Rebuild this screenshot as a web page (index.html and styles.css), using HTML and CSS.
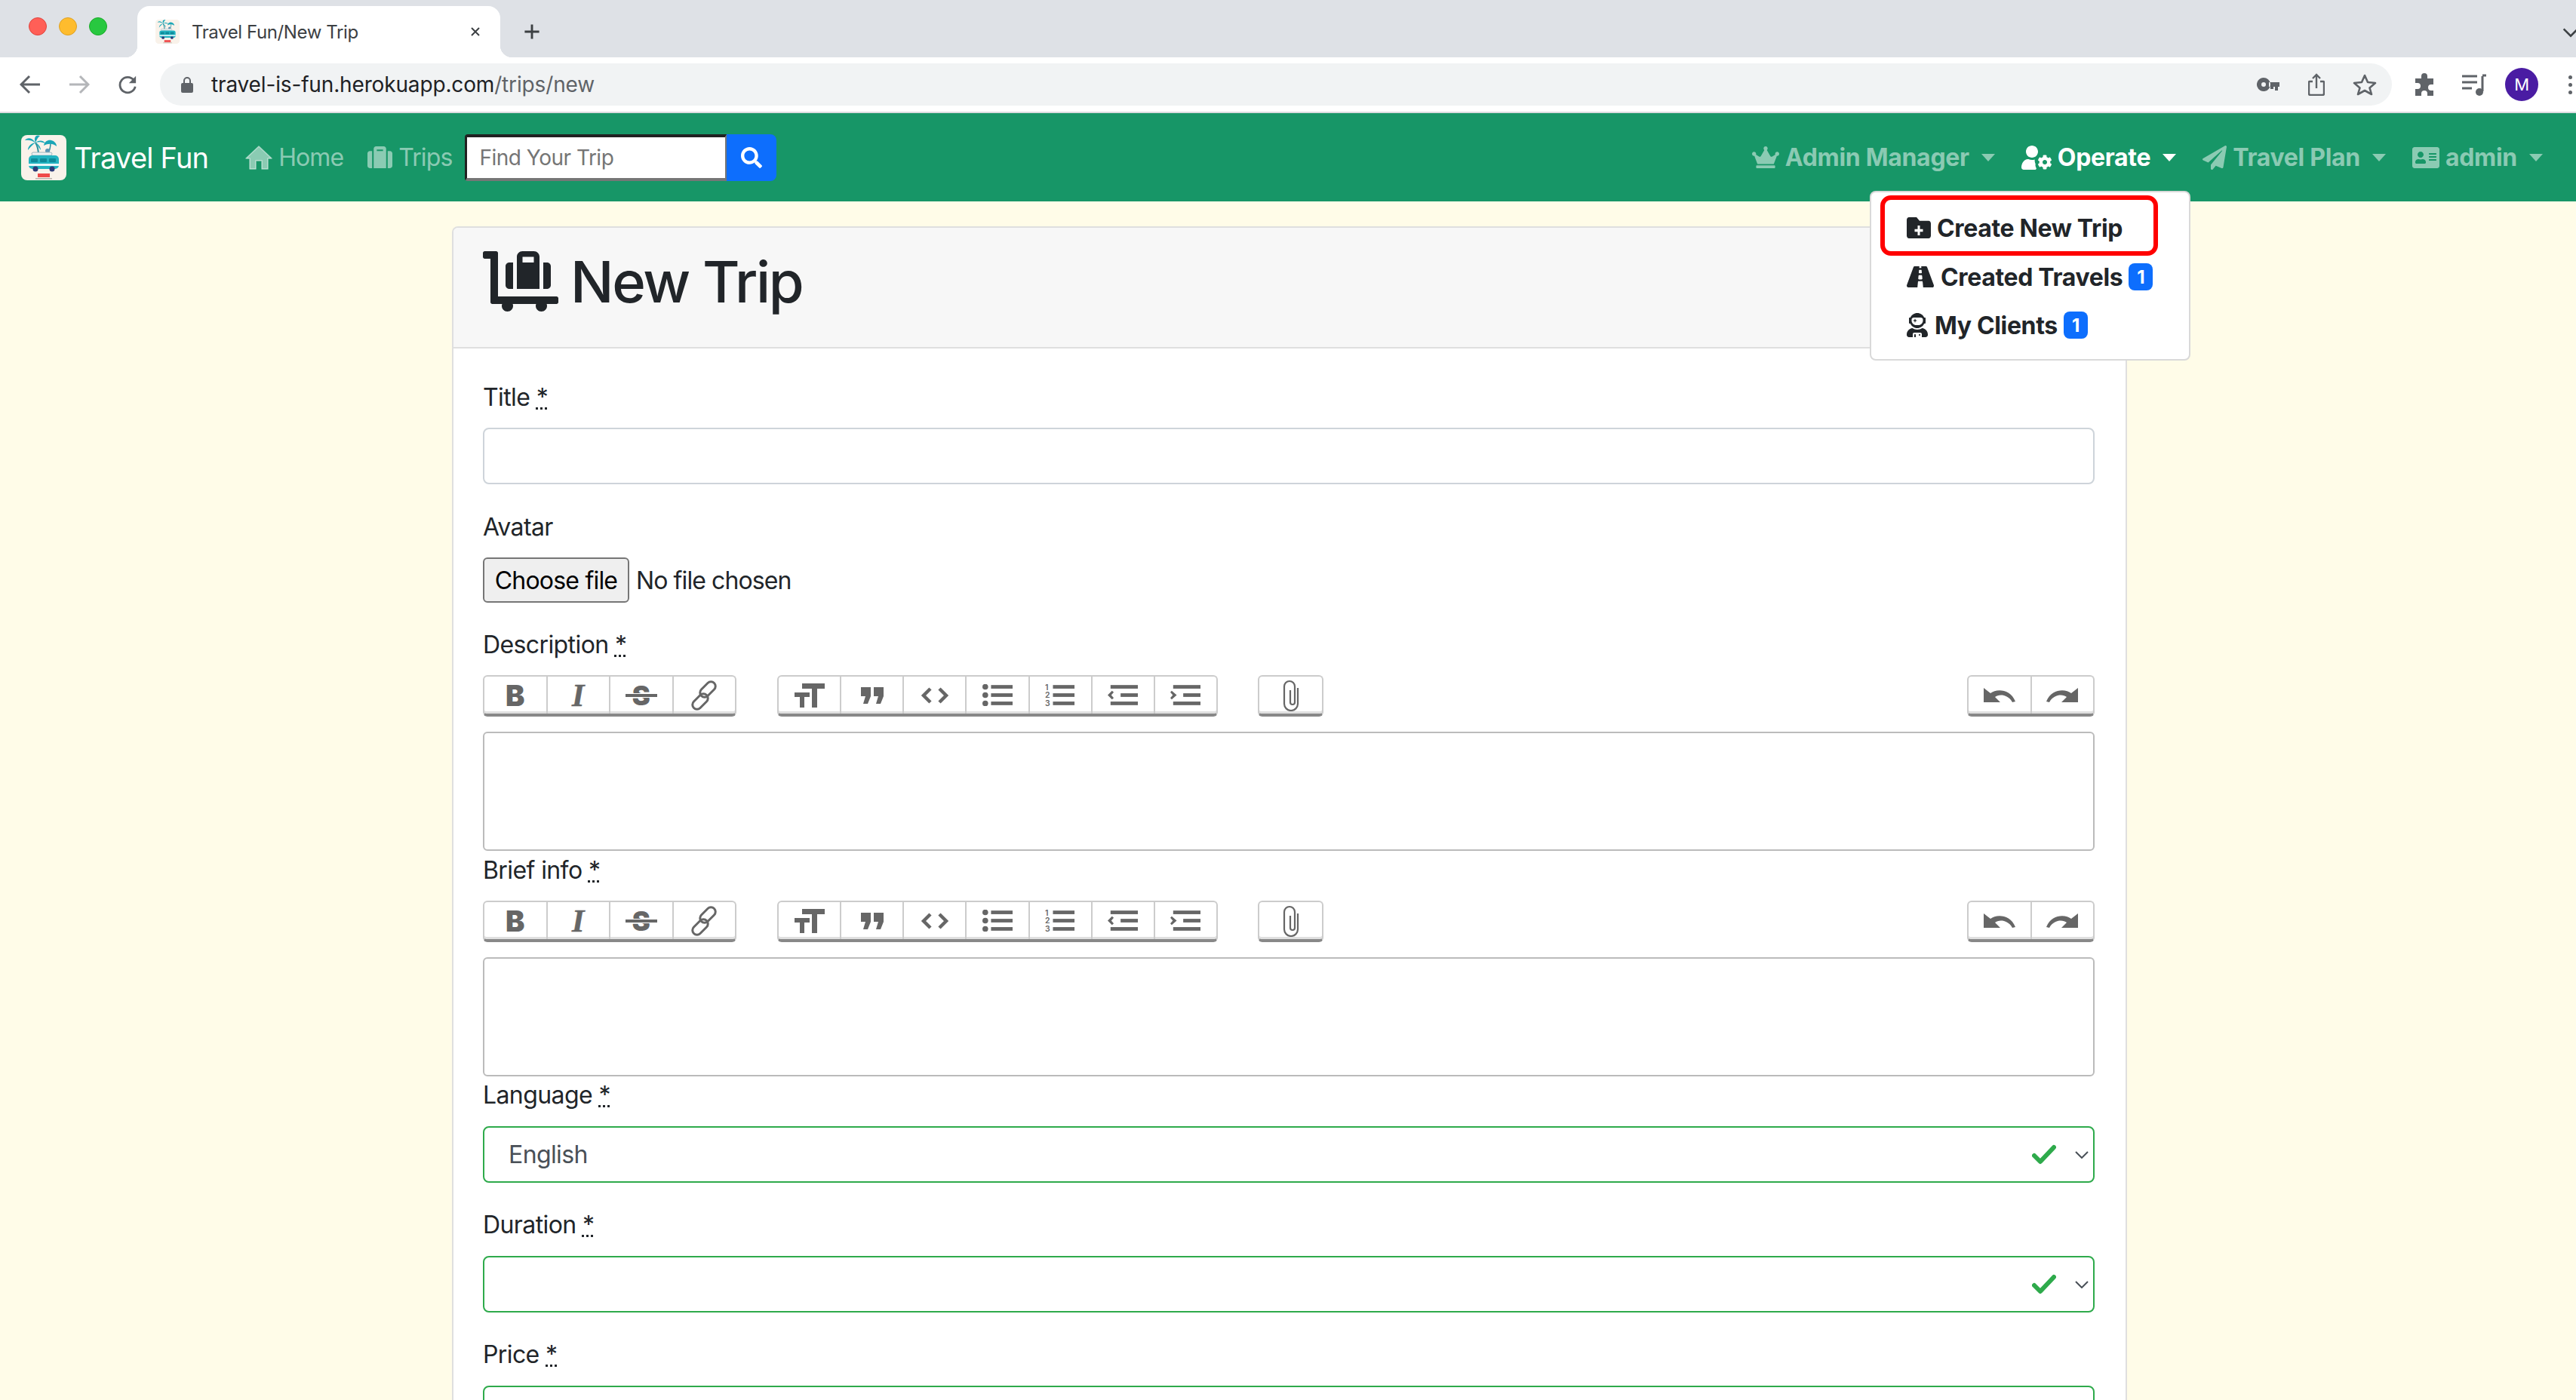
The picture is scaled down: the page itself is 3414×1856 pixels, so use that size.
FILE: index.html
```html
<!DOCTYPE html>
<html lang="en">
<head>
<meta charset="utf-8">
<title>Travel Fun/New Trip</title>
<link rel="stylesheet" href="styles.css">
</head>
<body>
<svg class="defs" width="0" height="0" aria-hidden="true">
  <symbol id="logo" viewBox="0 0 60 60">
    <rect width="60" height="60" rx="8" fill="#f9f2ea"/>
    <path d="M19 10c3 5 4 11 4 17" stroke="#2b8f9c" stroke-width="2" fill="none"/>
    <path d="M19 10C14 3 8 3 5 7c5-1 9 0 14 3zm0 0C16 3 20-1 25 1c-3 2-4 5-6 9zm0 0c5-4 11-3 13 1-5-2-9-2-13-1zm0 0c-6 1-10 5-10 10 3-4 6-7 10-10zm0 0c4 2 7 6 7 10-3-4-4-7-7-10z" fill="#1aa6b7"/>
    <path d="M39 10c0 5-1 10-3 14" stroke="#2b8f9c" stroke-width="1.500" fill="none"/>
    <path d="M30 14c1-6 6-8 10-7 4 1 7 4 7 8-5-4-11-4-17-1z" fill="#1aa6b7"/>
    <circle cx="35" cy="21" r="3" fill="#5b95b5"/>
    <rect x="14" y="23" width="27" height="4" rx="2" fill="#eef2f3" stroke="#9fb5bd"/>
    <rect x="10" y="27" width="40" height="18" rx="5" fill="#23b3c1"/>
    <rect x="13" y="31" width="9" height="5" rx="1" fill="#0f8a99"/><rect x="25" y="31" width="9" height="5" rx="1" fill="#0f8a99"/><rect x="37" y="31" width="9" height="5" rx="1" fill="#0f8a99"/>
    <rect x="10" y="38" width="40" height="3" fill="#e8f7f9"/>
    <circle cx="19" cy="45" r="3.500" fill="#2b3a78"/><circle cx="41" cy="45" r="3.500" fill="#2b3a78"/>
    <rect x="22" y="51" width="16" height="5" fill="#ef4a4a"/>
    <rect x="19" y="57" width="22" height="1.500" fill="#b9b3ad"/>
  </symbol>
</svg>

<div class="tabstrip">
  <div class="lights"><span class="light red"></span><span class="light yellow"></span><span class="light green"></span></div>
  <div class="tab">
    <svg class="favicon"><use href="#logo"/></svg>
    <span class="tab-title">Travel Fun/New Trip</span>
    <svg class="tab-close" viewBox="0 0 14 14"><path d="M2 2l10 10M12 2L2 12" stroke="#3c4043" stroke-width="2" fill="none"/></svg>
  </div>
  <svg class="new-tab" viewBox="0 0 20 20"><path d="M10 2v16M2 10h16" stroke="#3c4043" stroke-width="2.400" fill="none"/></svg>
  <svg class="tab-more" viewBox="0 0 18 12"><path d="M1 2l8 8 8-8" stroke="#3c4043" stroke-width="2.200" fill="none"/></svg>
</div>

<div class="toolbar">
  <svg class="tb-nav" viewBox="0 0 28 26"><path d="M27 13H3M13 2L2 13l11 11" stroke="#5f6368" stroke-width="3" fill="none"/></svg>
  <svg class="tb-nav dim" viewBox="0 0 28 26"><path d="M1 13h24M15 2l11 11-11 11" stroke="#b4b6b9" stroke-width="3" fill="none"/></svg>
  <svg class="tb-nav reload" viewBox="0 0 28 28"><path d="M23 8a11 11 0 1 0 2 9" stroke="#5f6368" stroke-width="3" fill="none"/><path d="M26 2v10H16z" fill="#5f6368"/></svg>
  <div class="omnibox">
    <svg class="lock" viewBox="0 0 16 22"><path d="M3 9V6a5 5 0 0 1 10 0v3h1a2 2 0 0 1 2 2v9a2 2 0 0 1-2 2H2a2 2 0 0 1-2-2v-9a2 2 0 0 1 2-2zm2 0h6V6a3 3 0 0 0-6 0z" fill="#5f6368"/></svg>
    <span class="url"><span class="url-host">travel-is-fun.herokuapp.com</span>/trips/new</span>
    <svg class="omni-key" viewBox="0 0 30 20"><path d="M9 1a9 9 0 1 1-8.500 12A9 9 0 0 1 9 1zm0 6a3 3 0 1 0 0 6 3 3 0 0 0 0-6zm7 0h14v6h-2v5h-4v-5h-2v3h-4v-3h-2z" fill="#5f6368" fill-rule="evenodd"/></svg>
    <svg class="omni-share" viewBox="0 0 22 30"><path d="M6 11H2a1 1 0 0 0-1 1v15a2 2 0 0 0 2 2h16a2 2 0 0 0 2-2V12a1 1 0 0 0-1-1h-4M11 20V2M6 7l5-5 5 5" stroke="#5f6368" stroke-width="2.400" fill="none"/></svg>
    <svg class="omni-star" viewBox="0 0 32 30"><path d="M16 3l4 9 10 1-7.500 6.500L25 28l-9-5-9 5 2.500-8.500L2 13l10-1z" stroke="#5f6368" stroke-width="2.600" fill="none" stroke-linejoin="round"/></svg>
  </div>
  <svg class="ext-puzzle" viewBox="0 0 30 30"><path d="M11 4a4 4 0 0 1 8 0v3h8v8h-3a4 4 0 0 0 0 8h3v7h-8v-3a4 4 0 0 0-8 0v3H3v-9h3a4 4 0 0 0 0-8H3V7h8z" fill="#5f6368"/></svg>
  <svg class="ext-music" viewBox="0 0 32 30"><path d="M0 4h20M0 12h20M0 20h13" stroke="#5f6368" stroke-width="3" fill="none"/><path d="M27 4v20" stroke="#5f6368" stroke-width="3"/><path d="M27 3h5" stroke="#5f6368" stroke-width="3"/><circle cx="23" cy="25" r="5" fill="#5f6368"/></svg>
  <span class="avatar">M</span>
  <span class="kebab"><i></i><i></i><i></i></span>
</div>

<nav class="navbar">
  <a class="brand"><svg class="brand-logo"><use href="#logo"/></svg><span>Travel Fun</span></a>
  <a class="nav-link home"><svg class="ic-home" viewBox="0 0 36 32"><path d="M18 1L35 17h-5v14h-8V20h-8v11H6V17H1z" fill="currentColor" stroke="currentColor" stroke-width="1.500" stroke-linejoin="round"/></svg>Home</a>
  <a class="nav-link trips"><svg class="ic-trips" viewBox="0 0 512 512"><path fill="currentColor" d="M128 480h256V80c0-26.500-21.500-48-48-48H176c-26.500 0-48 21.500-48 48v400zm64-384h128v32H192V96zm320 80v256c0 26.500-21.500 48-48 48h-48V128h48c26.500 0 48 21.500 48 48zM96 480H48c-26.500 0-48-21.500-48-48V176c0-26.500 21.500-48 48-48h48v352z"/></svg>Trips</a>
  <form class="search">
    <input class="search-input" type="text" placeholder="Find Your Trip">
    <button class="search-btn" type="button"><svg viewBox="0 0 512 512"><path fill="#fff" d="M505 442.700L405.300 343c-4.500-4.500-10.600-7-17-7H372c27.600-35.300 44-79.700 44-128C416 93.100 322.900 0 208 0S0 93.100 0 208s93.100 208 208 208c48.300 0 92.700-16.400 128-44v16.300c0 6.400 2.500 12.500 7 17l99.700 99.700c9.400 9.400 24.600 9.400 33.900 0l28.300-28.300c9.400-9.400 9.400-24.600.100-34zM208 336c-70.700 0-128-57.200-128-128 0-70.700 57.200-128 128-128 70.700 0 128 57.200 128 128 0 70.700-57.200 128-128 128z"/></svg></button>
  </form>
  <div class="nav-right">
    <a class="nav-menu admin-mgr"><svg class="ic-crown" viewBox="0 0 640 512"><path fill="currentColor" d="M528 448H112c-8.800 0-16 7.200-16 16v32c0 8.800 7.200 16 16 16h416c8.800 0 16-7.200 16-16v-32c0-8.800-7.200-16-16-16zm64-320c-26.500 0-48 21.500-48 48 0 7.100 1.600 13.700 4.400 19.800L476 239.200c-15.400 9.200-35.300 4-44.200-11.600L350.300 85C361 76.200 368 63 368 48c0-26.500-21.500-48-48-48s-48 21.500-48 48c0 15 7 28.200 17.600 37l-81.500 142.600c-8.900 15.600-28.900 20.800-44.200 11.600l-72.300-43.400c2.700-6 4.400-12.700 4.400-19.800 0-26.500-21.500-48-48-48S0 149.500 0 176s21.500 48 48 48c2.600 0 5.200-.4 7.700-.8L128 416h384l72.300-192.800c2.500.4 5.100.8 7.700.8 26.500 0 48-21.500 48-48s-21.500-48-48-48z"/></svg>Admin Manager<i class="caret"></i></a>
    <a class="nav-menu active"><svg class="ic-usercog" viewBox="0 0 640 512"><path fill="currentColor" d="M610.500 373.300c2.600-14.100 2.600-28.500 0-42.600l25.800-14.900c3-1.700 4.300-5.200 3.300-8.500-6.700-21.600-18.200-41.200-33.200-57.400-2.300-2.500-6-3.100-9-1.400l-25.800 14.900c-10.900-9.300-23.400-16.500-36.900-21.300v-29.800c0-3.400-2.400-6.400-5.700-7.100-22.300-5-45-4.800-66.200 0-3.300.7-5.700 3.700-5.700 7.100v29.800c-13.500 4.800-26 12-36.900 21.300l-25.800-14.900c-2.900-1.700-6.700-1.100-9 1.400-15 16.200-26.500 35.800-33.200 57.400-1 3.300.4 6.800 3.300 8.500l25.800 14.900c-2.600 14.100-2.600 28.500 0 42.600l-25.800 14.900c-3 1.700-4.300 5.200-3.300 8.500 6.700 21.600 18.200 41.100 33.200 57.400 2.300 2.500 6 3.100 9 1.400l25.800-14.900c10.900 9.300 23.400 16.500 36.900 21.300v29.800c0 3.400 2.400 6.400 5.700 7.100 22.300 5 45 4.800 66.200 0 3.300-.7 5.700-3.700 5.700-7.100v-29.800c13.500-4.800 26-12 36.900-21.300l25.800 14.900c2.900 1.700 6.700 1.100 9-1.400 15-16.200 26.500-35.800 33.200-57.400 1-3.300-.4-6.800-3.300-8.500l-25.800-14.900zM496 400.500c-26.800 0-48.500-21.800-48.500-48.500s21.800-48.500 48.500-48.500 48.500 21.800 48.500 48.500-21.700 48.500-48.500 48.500zM224 256c70.700 0 128-57.300 128-128S294.700 0 224 0 96 57.300 96 128s57.300 128 128 128zM0 464c0-90 60-176 134-176h17c22 10 47 16 73 16 20 0 40-4 58-10-2 40 4 70 18 96-10 30 0 60 16 90 4 8-4 32-20 32H48c-26 0-48-22-48-48z"/></svg>Operate<i class="caret"></i></a>
    <a class="nav-menu travel-plan"><svg class="ic-plane" viewBox="0 0 512 512"><path fill="currentColor" d="M476 3.200L12.500 270.600c-18.100 10.400-15.800 35.600 2.200 43.200L121 358.400l287.300-253.200c5.500-4.900 13.300 2.600 8.600 8.300L176 407v80.500c0 23.600 28.500 32.900 42.500 15.800L282 426l124.600 52.200c14.200 6 30.400-2.900 33-18.200l72-432C515 7.800 493.300-6.800 476 3.200z"/></svg>Travel Plan<i class="caret"></i></a>
    <a class="nav-menu"><svg class="ic-idcard" viewBox="0 32 576 448"><path fill="currentColor" d="M528 32H48C21.500 32 0 53.500 0 80v352c0 26.500 21.500 48 48 48h480c26.500 0 48-21.500 48-48V80c0-26.500-21.500-48-48-48zm-352 96c35.300 0 64 28.700 64 64s-28.700 64-64 64-64-28.700-64-64 28.700-64 64-64zm112 236.800c0 10.600-10 19.200-22.400 19.200H86.400C74 384 64 375.400 64 364.800v-19.200c0-31.800 30.100-57.600 67.200-57.600h5c12.300 5.100 25.700 8 39.800 8s27.600-2.900 39.800-8h5c37.100 0 67.200 25.800 67.200 57.600v19.200zM512 312c0 4.400-3.600 8-8 8H360c-4.400 0-8-3.600-8-8v-16c0-4.400 3.600-8 8-8h144c4.400 0 8 3.600 8 8v16zm0-64c0 4.400-3.600 8-8 8H360c-4.400 0-8-3.600-8-8v-16c0-4.400 3.600-8 8-8h144c4.400 0 8 3.600 8 8v16zm0-64c0 4.400-3.600 8-8 8H360c-4.400 0-8-3.600-8-8v-16c0-4.400 3.600-8 8-8h144c4.400 0 8 3.600 8 8v16z"/></svg>admin<i class="caret"></i></a>
  </div>
</nav>

<div class="dropdown">
  <a class="dd-item highlighted"><svg class="ic-folder" viewBox="0 64 512 384" preserveAspectRatio="none"><path fill="#212529" fill-rule="evenodd" d="M464 128H272l-64-64H48C21.490 64 0 85.490 0 112v288c0 26.510 21.490 48 48 48h416c26.510 0 48-21.490 48-48V176c0-26.510-21.490-48-48-48zM232 216h48v64h64v48h-64v64h-48v-64h-64v-48h64z"/></svg>Create New Trip</a>
  <a class="dd-item second"><svg class="ic-road" viewBox="0 64 576 384" preserveAspectRatio="none"><path fill="#212529" d="M573.190 402.670l-139.790-320C428.430 71.290 417.600 64 405.680 64h-97.590l2.450 23.160c.5 4.720-3.210 8.840-7.960 8.840h-29.160c-4.750 0-8.460-4.120-7.960-8.840L267.910 64h-97.590c-11.930 0-22.760 7.290-27.730 18.670L2.800 402.670C-6.450 423.860 8.310 448 30.540 448h196.840l10.310-97.680c.86-8.140 7.720-14.320 15.910-14.320h68.800c8.190 0 15.050 6.180 15.910 14.320L348.620 448h196.840c22.230 0 36.990-24.140 27.730-45.330zM260.400 135.160a8 8 0 0 1 7.960-7.160h39.290c4.090 0 7.530 3.090 7.960 7.160l4.600 43.580c.75 7.090-4.810 13.260-11.930 13.260h-40.540c-7.130 0-12.680-6.170-11.930-13.260l4.600-43.580zM315.640 304h-55.290c-9.500 0-16.910-8.230-15.910-17.680l5.070-48c.86-8.140 7.720-14.320 15.910-14.320h45.150c8.190 0 15.050 6.180 15.910 14.320l5.070 48c1 9.450-6.410 17.680-15.910 17.680z"/></svg>Created Travels<span class="badge">1</span></a>
  <a class="dd-item"><svg class="ic-astro" viewBox="0 0 448 512"><path fill="#212529" d="M64 224h13.500c24.700 56.500 80.900 96 146.500 96s121.800-39.500 146.500-96H384c8.800 0 16-7.200 16-16v-96c0-8.800-7.200-16-16-16h-13.500C345.800 39.500 289.600 0 224 0S102.200 39.500 77.500 96H64c-8.800 0-16 7.200-16 16v96c0 8.800 7.200 16 16 16zm40-88c0-22 21.500-40 48-40h144c26.500 0 48 18 48 40v24c0 53-43 96-96 96h-48c-53 0-96-43-96-96v-24zm72 72l12-36 36-12-36-12-12-36-12 36-36 12 36 12 12 36zm151.600 113.400C297.700 340.700 262.200 352 224 352s-73.700-11.300-103.600-30.600C52.900 328.500 0 385 0 454.400v9.600c0 26.500 21.500 48 48 48h80v-64c0-17.700 14.300-32 32-32h128c17.700 0 32 14.300 32 32v64h80c26.500 0 48-21.500 48-48v-9.600c0-69.400-52.900-125.900-120.400-133zM272 448c-8.800 0-16 7.200-16 16s7.200 16 16 16 16-7.200 16-16-7.200-16-16-16zm-96 0c-8.800 0-16 7.200-16 16v48h32v-48c0-8.800-7.200-16-16-16z"/></svg>My Clients<span class="badge">1</span></a>
</div>

<main class="page">
  <section class="card">
    <header class="card-header">
      <svg class="ic-cart" viewBox="0 0 640 512"><path fill="#212529" d="M224 320h32V96h-32c-17.670 0-32 14.330-32 32v160c0 17.670 14.330 32 32 32zm352-32V128c0-17.670-14.330-32-32-32h-32v224h32c17.670 0 32-14.330 32-32zm48 96H128V16c0-8.840-7.160-16-16-16H16C7.160 0 0 7.160 0 16v32c0 8.840 7.160 16 16 16h48v368c0 8.840 7.160 16 16 16h82.940c-1.790 5.030-2.940 10.360-2.940 16 0 26.510 21.490 48 48 48s48-21.490 48-48c0-5.640-1.150-10.970-2.940-16h197.880c-1.790 5.030-2.940 10.360-2.940 16 0 26.510 21.490 48 48 48s48-21.490 48-48c0-5.640-1.150-10.970-2.940-16H624c8.840 0 16-7.160 16-16v-32c0-8.840-7.160-16-16-16zM480 96V48c0-26.510-21.490-48-48-48h-96c-26.510 0-48 21.490-48 48v272h192V96zm-48 0h-96V48h96v48z"/></svg>
      <h1>New Trip</h1>
    </header>
    <form class="card-body">
      <div class="field title-field">
        <label>Title <abbr title="required">*</abbr></label>
        <input class="control" type="text">
      </div>
      <div class="field">
        <label>Avatar</label>
        <div class="file-row"><button class="file-btn" type="button">Choose file</button><span class="file-name">No file chosen</span></div>
      </div>

      <div class="rich">
        <label>Description <abbr title="required">*</abbr></label>
        <div class="trix-toolbar">
          <div class="btn-group g-text">
            <button type="button" class="tbtn w86"><b class="g-b">B</b></button>
            <button type="button" class="tbtn"><i class="g-i">I</i></button>
            <button type="button" class="tbtn"><span class="g-s">S</span></button>
            <button type="button" class="tbtn"><svg class="ti sq" viewBox="0 0 40 40"><g fill="none" stroke="#666" stroke-width="3"><rect x="19" y="0" width="12" height="24" rx="6" transform="rotate(45 25 12)"/><rect x="9" y="16" width="12" height="24" rx="6" transform="rotate(45 15 28)"/></g></svg></button>
          </div>
          <div class="btn-group g-block">
            <button type="button" class="tbtn"><svg class="ti sq" viewBox="0 0 40 40"><path fill="#666" d="M10 4h30v7H30v25h-7V11H10zM0 16h20v6h-7v14H7V22H0z"/></svg></button>
            <button type="button" class="tbtn"><svg class="ti sq" viewBox="0 0 40 40"><path fill="#666" d="M5 9h13v12l-4 10H8l3-10H5zM22 9h13v12l-4 10h-6l3-10h-6z"/></svg></button>
            <button type="button" class="tbtn"><svg class="ti sq" viewBox="0 0 40 40"><path fill="none" stroke="#666" stroke-width="4.500" d="M14 11l-9 9 9 9M26 11l9 9-9 9"/></svg></button>
            <button type="button" class="tbtn"><svg class="ti" viewBox="0 0 42 30"><g fill="#666"><circle cx="4" cy="3.500" r="4"/><circle cx="4" cy="15" r="4"/><circle cx="4" cy="26.500" r="4"/><rect x="12" y="1" width="30" height="5"/><rect x="12" y="12.500" width="30" height="5"/><rect x="12" y="24" width="30" height="5"/></g></svg></button>
            <button type="button" class="tbtn"><svg class="ti ti-num" viewBox="0 -4 42 38"><g fill="#666"><text x="0" y="8" class="num">1</text><text x="0" y="19" class="num">2</text><text x="0" y="30" class="num">3</text><rect x="11" y="1" width="30" height="5"/><rect x="11" y="12.500" width="30" height="5"/><rect x="11" y="24" width="30" height="5"/></g></svg></button>
            <button type="button" class="tbtn"><svg class="ti" viewBox="0 0 42 30"><g fill="#666"><rect x="4" y="1" width="38" height="5"/><rect x="18" y="12.500" width="24" height="5"/><rect x="4" y="24" width="38" height="5"/><path d="M6 9l2.500 2L5 15l3.500 4L6 21l-6-6z"/></g></svg></button>
            <button type="button" class="tbtn"><svg class="ti" viewBox="0 0 42 30"><g fill="#666"><rect x="4" y="1" width="38" height="5"/><rect x="18" y="12.500" width="24" height="5"/><rect x="4" y="24" width="38" height="5"/><path d="M2 9l7 6-7 6-2-2 3.500-4L0 11z"/></g></svg></button>
          </div>
          <div class="btn-group g-file">
            <button type="button" class="tbtn wide"><svg class="ti tall" viewBox="0 0 22 42"><path fill="none" stroke="#666" stroke-width="2.200" d="M20 11v21a9 9 0 0 1-18 0V9a7 7 0 0 1 14 0v21a3 3 0 0 1-6 0V14"/></svg></button>
          </div>
          <div class="btn-group g-hist">
            <button type="button" class="tbtn half"><svg class="ti" viewBox="0 0 42 20"><path fill="#666" d="M0 0l9 7c8-6 26-6 33 11l-4 1C32 8 20 8 15 12l7 7H0z"/></svg></button>
            <button type="button" class="tbtn half"><svg class="ti" viewBox="0 0 42 20"><path fill="#666" d="M42 0l-9 7C25 1 7 1 0 18l4 1C10 8 22 8 27 12l-7 7h22z"/></svg></button>
          </div>
        </div>
        <div class="editor"></div>
      </div>

      <div class="rich">
        <label>Brief info <abbr title="required">*</abbr></label>
        <div class="trix-toolbar">
          <div class="btn-group g-text">
            <button type="button" class="tbtn w86"><b class="g-b">B</b></button>
            <button type="button" class="tbtn"><i class="g-i">I</i></button>
            <button type="button" class="tbtn"><span class="g-s">S</span></button>
            <button type="button" class="tbtn"><svg class="ti sq" viewBox="0 0 40 40"><g fill="none" stroke="#666" stroke-width="3"><rect x="19" y="0" width="12" height="24" rx="6" transform="rotate(45 25 12)"/><rect x="9" y="16" width="12" height="24" rx="6" transform="rotate(45 15 28)"/></g></svg></button>
          </div>
          <div class="btn-group g-block">
            <button type="button" class="tbtn"><svg class="ti sq" viewBox="0 0 40 40"><path fill="#666" d="M10 4h30v7H30v25h-7V11H10zM0 16h20v6h-7v14H7V22H0z"/></svg></button>
            <button type="button" class="tbtn"><svg class="ti sq" viewBox="0 0 40 40"><path fill="#666" d="M5 9h13v12l-4 10H8l3-10H5zM22 9h13v12l-4 10h-6l3-10h-6z"/></svg></button>
            <button type="button" class="tbtn"><svg class="ti sq" viewBox="0 0 40 40"><path fill="none" stroke="#666" stroke-width="4.500" d="M14 11l-9 9 9 9M26 11l9 9-9 9"/></svg></button>
            <button type="button" class="tbtn"><svg class="ti" viewBox="0 0 42 30"><g fill="#666"><circle cx="4" cy="3.500" r="4"/><circle cx="4" cy="15" r="4"/><circle cx="4" cy="26.500" r="4"/><rect x="12" y="1" width="30" height="5"/><rect x="12" y="12.500" width="30" height="5"/><rect x="12" y="24" width="30" height="5"/></g></svg></button>
            <button type="button" class="tbtn"><svg class="ti ti-num" viewBox="0 -4 42 38"><g fill="#666"><text x="0" y="8" class="num">1</text><text x="0" y="19" class="num">2</text><text x="0" y="30" class="num">3</text><rect x="11" y="1" width="30" height="5"/><rect x="11" y="12.500" width="30" height="5"/><rect x="11" y="24" width="30" height="5"/></g></svg></button>
            <button type="button" class="tbtn"><svg class="ti" viewBox="0 0 42 30"><g fill="#666"><rect x="4" y="1" width="38" height="5"/><rect x="18" y="12.500" width="24" height="5"/><rect x="4" y="24" width="38" height="5"/><path d="M6 9l2.500 2L5 15l3.500 4L6 21l-6-6z"/></g></svg></button>
            <button type="button" class="tbtn"><svg class="ti" viewBox="0 0 42 30"><g fill="#666"><rect x="4" y="1" width="38" height="5"/><rect x="18" y="12.500" width="24" height="5"/><rect x="4" y="24" width="38" height="5"/><path d="M2 9l7 6-7 6-2-2 3.500-4L0 11z"/></g></svg></button>
          </div>
          <div class="btn-group g-file">
            <button type="button" class="tbtn wide"><svg class="ti tall" viewBox="0 0 22 42"><path fill="none" stroke="#666" stroke-width="2.200" d="M20 11v21a9 9 0 0 1-18 0V9a7 7 0 0 1 14 0v21a3 3 0 0 1-6 0V14"/></svg></button>
          </div>
          <div class="btn-group g-hist">
            <button type="button" class="tbtn half"><svg class="ti" viewBox="0 0 42 20"><path fill="#666" d="M0 0l9 7c8-6 26-6 33 11l-4 1C32 8 20 8 15 12l7 7H0z"/></svg></button>
            <button type="button" class="tbtn half"><svg class="ti" viewBox="0 0 42 20"><path fill="#666" d="M42 0l-9 7C25 1 7 1 0 18l4 1C10 8 22 8 27 12l-7 7h22z"/></svg></button>
          </div>
        </div>
        <div class="editor"></div>
      </div>

      <div class="field green-field">
        <label>Language <abbr title="required">*</abbr></label>
        <div class="select-wrap">
          <select class="control valid"><option>English</option></select>
          <svg class="check" viewBox="0 0 32 28"><path d="M3 15l8 8L29 4" fill="none" stroke="#2eaa4b" stroke-width="6" stroke-linecap="round" stroke-linejoin="round"/></svg>
          <svg class="chev" viewBox="0 0 18 10"><path d="M1 1l8 8 8-8" fill="none" stroke="#495057" stroke-width="2"/></svg>
        </div>
      </div>
      <div class="field green-field">
        <label>Duration <abbr title="required">*</abbr></label>
        <div class="select-wrap">
          <select class="control valid"><option></option></select>
          <svg class="check" viewBox="0 0 32 28"><path d="M3 15l8 8L29 4" fill="none" stroke="#2eaa4b" stroke-width="6" stroke-linecap="round" stroke-linejoin="round"/></svg>
          <svg class="chev" viewBox="0 0 18 10"><path d="M1 1l8 8 8-8" fill="none" stroke="#495057" stroke-width="2"/></svg>
        </div>
      </div>
      <div class="field green-field">
        <label>Price <abbr title="required">*</abbr></label>
        <input class="control valid" type="text">
      </div>
    </form>
  </section>
</main>
</body>
</html>
```

FILE: styles.css
```css
* { box-sizing: border-box; }
html, body { margin: 0; padding: 0; }
body {
  width: 3414px;
  height: 1856px;
  overflow: hidden;
  position: relative;
  background: #fffce8;
  font-family: Inter, "Liberation Sans", sans-serif;
  font-size: 32px;
  letter-spacing: -.6px;
  color: #212529;
}
.defs { position: absolute; }
svg { display: block; flex: none; }

/* browser chrome */
.tabstrip {
  height: 76px;
  background: #dee1e6;
  display: flex;
  align-items: flex-end;
  position: relative;
  padding-left: 38px;
}
.lights { display: flex; gap: 16px; align-self: flex-start; margin-top: 23px; margin-right: 40px; }
.light { width: 24px; height: 24px; border-radius: 50%; }
.red { background: #ff5f57; border: 1px solid #e0443e; }
.yellow { background: #febc2e; border: 1px solid #dea123; }
.green { background: #28c840; border: 1px solid #1aab29; }
.tab {
  width: 481px;
  height: 68px;
  background: #fff;
  border-radius: 16px 16px 0 0;
  display: flex;
  align-items: center;
  padding-left: 24px;
  padding-right: 26px;
  position: relative;
}
.tab::before, .tab::after {
  content: "";
  position: absolute;
  bottom: 0;
  width: 16px;
  height: 16px;
}
.tab::before { left: -16px; background: radial-gradient(circle at 0 0, transparent 16px, #fff 16.5px); }
.tab::after { right: -16px; background: radial-gradient(circle at 100% 0, transparent 16px, #fff 16.5px); }
.favicon { width: 32px; height: 32px; }
.tab-title { margin-left: 16px; font-size: 24px; letter-spacing: -.4px; color: #3c4043; flex: 1; white-space: nowrap; }
.tab-close { width: 14px; height: 14px; }
.new-tab { width: 24px; height: 24px; margin-left: 30px; align-self: center; margin-top: 8px; }
.tab-more { position: absolute; right: -4px; top: 36px; width: 22px; height: 14px; }

.toolbar {
  height: 74px;
  background: #fff;
  border-bottom: 2px solid #dadce0;
  display: flex;
  align-items: center;
  padding-left: 26px;
  position: relative;
}
.tb-nav { width: 28px; height: 26px; margin-right: 37px; }
.tb-nav.dim { margin-right: 36px; }
.tb-nav.reload { margin-right: 29px; }
.omnibox {
  width: 2958px;
  height: 56px;
  background: #f1f3f4;
  border-radius: 28px;
  display: flex;
  align-items: center;
  padding-left: 28px;
}
.lock { width: 16px; height: 22px; }
.url { margin-left: 24px; font-size: 28px; letter-spacing: -.15px; color: #5f6368; white-space: nowrap; }
.url-host { color: #202124; }
.omni-key { width: 30px; height: 20px; margin-left: auto; }
.omni-share { width: 22px; height: 30px; margin-left: 38px; }
.omni-star { width: 32px; height: 30px; margin-left: 37px; margin-right: 20px; }
.ext-puzzle { width: 30px; height: 30px; margin-left: 28px; }
.ext-music { width: 32px; height: 30px; margin-left: 35px; }
.avatar {
  width: 44px; height: 44px; margin-left: 25px;
  border-radius: 50%;
  background: #4a1ca3;
  color: #fff;
  font-size: 22px;
  display: flex; align-items: center; justify-content: center;
}
.kebab { display: flex; flex-direction: column; gap: 5px; margin-left: 40px; }
.kebab i { width: 5px; height: 5px; border-radius: 50%; background: #5f6368; }

/* navbar */
.navbar {
  height: 117px;
  background: #179667;
  display: flex;
  align-items: center;
  padding-left: 28px;
  padding-right: 44px;
  color: rgba(255,255,255,.5);
}
.brand { display: flex; align-items: center; color: #fff; font-size: 38px; letter-spacing: -.8px; }
.brand-logo { width: 60px; height: 60px; margin-right: 10px; }
.nav-link { display: flex; align-items: center; gap: 8px; letter-spacing: -.9px; }
.home { margin-left: 49px; }
.trips { margin-left: 32px; }
.ic-home { width: 36px; height: 32px; }
.ic-trips { width: 33px; height: 33px; }
.search { display: flex; margin-left: 17px; }
.search-input {
  width: 347px;
  height: 62px;
  border-style: solid;
  border-width: 4px 2px 4px 3px;
  border-color: #212121 #767676 #767676 #212121;
  background: #fff;
  padding: 0 0 0 16px;
  font-family: inherit;
  font-size: 28px;
  letter-spacing: -.5px;
  border-radius: 4px 0 0 4px;
}
.search-input::placeholder { color: #757575; opacity: 1; }
.search-btn {
  width: 66px; height: 62px;
  background: #0d6efd;
  border: 0;
  border-radius: 0 8px 8px 0;
  display: flex; align-items: center; justify-content: center;
  padding: 0;
}
.search-btn svg { width: 28px; height: 28px; }
.nav-right { margin-left: auto; display: flex; align-items: center; gap: 35px; }
.nav-menu { display: flex; align-items: center; font-weight: 700; letter-spacing: -.3px; gap: 8px; white-space: nowrap; }
.nav-menu.active { color: #fff; }
.caret {
  width: 0; height: 0;
  margin-left: 8px;
  border-left: 9px solid transparent;
  border-right: 9px solid transparent;
  border-top: 10px solid currentColor;
}
.ic-crown { width: 36px; height: 29px; }
.ic-usercog { width: 40px; height: 32px; }
.ic-plane { width: 32px; height: 32px; }
.ic-idcard { width: 36px; height: 28px; }

/* dropdown */
.dropdown {
  position: absolute;
  left: 2478px;
  top: 253px;
  width: 425px;
  height: 225px;
  background: #fff;
  border: 2px solid rgba(0,0,0,.15);
  border-radius: 8px;
  padding-top: 4px;
  z-index: 5;
}
.dd-item {
  height: 64px;
  display: flex;
  align-items: center;
  font-weight: 700;
  letter-spacing: -.35px;
  padding-left: 47px;
  white-space: nowrap;
}
.highlighted {
  height: 80px;
  width: 368px;
  margin-left: 12px;
  border: 6px solid #f00;
  border-radius: 14px;
  padding-left: 29px;
  padding-top: 6px;
  gap: 8px;
}
.second { margin-top: -4px; }
.dd-item svg { margin-right: 9px; }
.highlighted svg { margin-right: 0; }
.ic-folder { width: 32px; height: 28px; }
.ic-road { width: 36px; height: 28px; }
.ic-astro { width: 28px; height: 32px; }
.badge {
  width: 32px; height: 36px;
  margin-left: 8px;
  background: #0d6efd;
  color: #fff;
  border-radius: 8px;
  font-size: 24px;
  font-weight: 700;
  display: flex; align-items: center; justify-content: center;
}

/* page */
.page { width: 2220px; margin: 33px 0 0 599px; }
.card {
  background: #fff;
  border: 2px solid #dfdfdf;
  border-bottom: 0;
  border-radius: 8px 8px 0 0;
}
.card-header {
  height: 160px;
  background: #f7f7f7;
  border-bottom: 2px solid #dfdfdf;
  display: flex;
  align-items: center;
  gap: 16px;
  padding: 0 0 16px 39px;
  border-radius: 6px 6px 0 0;
}
.ic-cart { width: 100px; height: 80px; }
h1 { margin: 0; font-size: 76px; font-weight: 500; letter-spacing: -2.3px; line-height: 96px; }
.card-body { padding: 41px 41px 0 39px; }
.field { margin-bottom: 32px; }
.title-field { margin-bottom: 33px; }
label { display: block; line-height: 48px; margin-bottom: 16px; }
abbr { text-decoration: underline dotted; }
.control {
  display: block;
  width: 100%;
  height: 75px;
  border: 2px solid #ced4da;
  border-radius: 8px;
  background: #fff;
  font-family: inherit;
  font-size: 32px;
  letter-spacing: -.6px;
  color: #495057;
  padding: 0 32px;
}
select.control { appearance: none; padding-left: 32px; }
.valid { border-color: #2eaa4b; }
.green-field label { margin-bottom: 17px; }
.select-wrap { position: relative; }
.check { position: absolute; right: 51px; top: 24px; width: 32px; height: 28px; }
.chev { position: absolute; right: 8px; top: 33px; width: 18px; height: 10px; }

.file-row { display: flex; align-items: center; gap: 9px; color: #212529; }
.file-name { letter-spacing: -.9px; }
.file-btn {
  width: 194px; height: 60px;
  background: #efefef;
  border: 2px solid #767676;
  border-radius: 6px;
  font-family: inherit;
  font-size: 32px;
  letter-spacing: -.8px;
  color: #000;
  padding: 0;
}

.trix-toolbar { display: flex; height: 55px; margin-bottom: 20px; }
.btn-group {
  display: flex;
  height: 55px;
  border: 2px solid #ccc;
  border-bottom: 4px solid #888;
  border-radius: 6px;
  background: #fff;
  box-shadow: inset 0 -3px 0 #e0e0e0;
}
.g-text { width: 336px; }
.g-block { width: 584px; margin-left: 54px; }
.g-file { width: 87px; margin-left: 53px; }
.g-hist { width: 169px; margin-left: auto; }
.tbtn {
  flex: 1;
  border: 0;
  border-right: 2px solid #ccc;
  background: transparent;
  padding: 0;
  display: flex;
  align-items: center;
  justify-content: center;
  color: #666;
}
.tbtn:last-child { border-right: 0; }
.ti { width: 40px; height: 29px; }
.ti.sq { width: 40px; height: 40px; }
.ti.ti-num { width: 40px; height: 37px; }
.ti.tall { width: 22px; height: 42px; }
.half .ti { width: 42px; height: 20px; }
.g-b { font-family: Inter, sans-serif; font-weight: 900; font-size: 38px; line-height: 1; letter-spacing: 0; }
.g-i { font-family: "Liberation Serif", serif; font-weight: 700; font-style: italic; font-size: 42px; line-height: 1; letter-spacing: 0; -webkit-text-stroke: .6px #666; }
.g-s { font-family: Inter, sans-serif; font-weight: 900; font-size: 36px; line-height: 1; letter-spacing: 0; position: relative; display: block; }
.g-s::after {
  content: "";
  position: absolute;
  left: -9px;
  right: -9px;
  top: 50%;
  height: 4px;
  margin-top: -2px;
  background: #666;
  box-shadow: 0 0 0 1px #fff;
}
.num { font-family: Inter, sans-serif; font-size: 11px; font-weight: 600; fill: #666; letter-spacing: 0; }
.editor {
  height: 158px;
  border: 2px solid #bbb;
  border-radius: 6px;
  background: #fff;
}
.rich + .rich { margin-top: 2px; }
.rich + .field { margin-top: 1px; }
```
